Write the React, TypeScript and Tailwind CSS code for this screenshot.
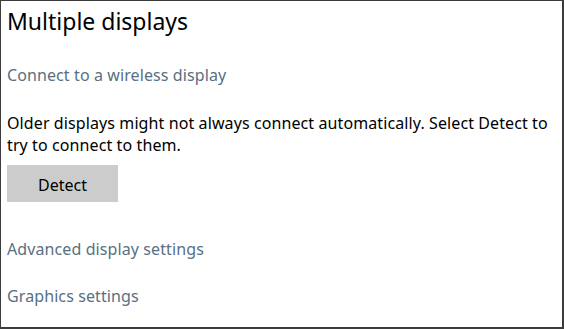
export default function App() {
  const font = { fontFamily: '"Noto Sans", "Open Sans", sans-serif' };
  return (
    <div className="w-[564px] h-[329px] bg-white border-l border-t border-r-2 border-b-2 border-[#3c3c3c] box-border overflow-hidden" style={font}>
      <div className="flex flex-col items-start pl-[6px]">
        <h1 className="mt-[4px] text-[23px] leading-[32px] text-black font-normal">Multiple displays</h1>
        <a className="mt-[27px] text-[16px] leading-[22px] tracking-[0.1px] text-[#587083]">Connect to a wireless display</a>
        <p className="mt-[26px] text-[16px] leading-[22px] tracking-[0.1px] text-black pr-[4px]">
          Older displays might not always connect automatically. Select Detect to try to connect to them.
        </p>
        <button className="mt-[9px] w-[111px] h-[37px] pt-[3px] bg-[#cccccc] text-[16px] text-black flex items-center justify-center">Detect</button>
        <a className="mt-[36px] text-[16px] leading-[22px] tracking-[0.1px] text-[#587083]">Advanced display settings</a>
        <a className="mt-[25px] text-[16px] leading-[22px] tracking-[0.1px] text-[#587083]">Graphics settings</a>
      </div>
    </div>
  );
}
